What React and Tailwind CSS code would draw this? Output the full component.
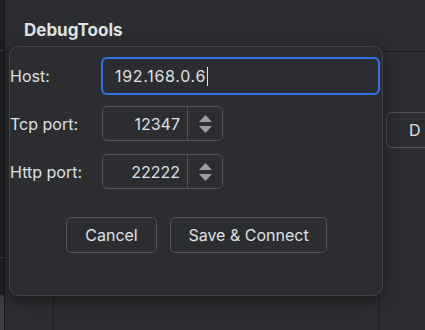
import React from 'react';

const font = { fontFamily: 'Inter, "Noto Sans", sans-serif' };

const Spinner = ({ value }) => (
    <div className="flex w-[121px] h-[35px] rounded-[5px] border border-[#4e5157]">
        <div className="flex-1 flex items-center justify-end pr-[7px] text-[16px] text-[#dfe1e5] border-r border-[#4e5157]">
            {value}
        </div>
        <div className="w-[34px] flex flex-col items-center justify-center gap-[4px]">
            <svg width="13" height="7" viewBox="0 0 13 7"><path d="M6.5 0 L13 7 L0 7 Z" fill="#9a9da3" /></svg>
            <svg width="13" height="7" viewBox="0 0 13 7"><path d="M0 0 L13 0 L6.5 7 Z" fill="#9a9da3" /></svg>
        </div>
    </div>
);

export default function App() {
    return (
        <div className="relative w-[425px] h-[330px] overflow-hidden bg-[#2b2d30] flex flex-col" style={font}>
            {/* top edge */}
            <div className="h-[3px] bg-[#1e1f22]" />
            <div className="flex-1 flex">
                {/* left tool strip */}
                <div className="w-[8px] bg-[#1e1f22] border-r border-[#18191b] flex flex-col">
                    <div className="h-[51px] border-b border-[#3a3c40]" />
                    <div className="h-[207px] border-b border-[#3a3c40]" />
                    <div className="mt-[37px] h-[40px] w-[4px] rounded-r-[3px] bg-[#3c3e42]" />
                </div>
                <div className="flex-1 flex flex-col">
                    {/* header */}
                    <div className="h-[52px] flex items-center pl-[19px] pt-[10px] border-b border-[#1e1f22]">
                        <span className="text-[17px] font-bold text-[#dfe1e5]">DebugTools</span>
                    </div>
                    <div className="flex-1 flex">
                        <div className="w-[49px] border-r border-[#1e1f22]" />
                        <div className="w-[325px] border-r border-[#1e1f22]" />
                        <div className="flex-1 pl-[7px] pt-[60px]">
                            <div className="w-[60px] h-[36px] rounded-[5px] border border-[#4e5157] flex items-center pl-[22px] text-[16px] text-[#dfe1e5] overflow-hidden whitespace-nowrap">
                                D
                            </div>
                        </div>
                    </div>
                </div>
            </div>

            {/* dialog */}
            <div className="absolute left-[9px] top-[46px] w-[374px] h-[250px] rounded-[10px] border border-[#43454a] bg-[#2b2d30] shadow-[0_4px_16px_rgba(0,0,0,0.45)] pt-[10px] pr-[2px]">
                <div className="flex items-center h-[38px]">
                    <div className="w-[91px] text-[16px] text-[#dfe1e5]">Host:</div>
                    <div className="flex-1 h-[38px] rounded-[6px] border-2 border-[#3574f0] flex items-center pl-[12px] text-[16px] tracking-[0.7px] text-[#dfe1e5]">
                        192.168.0.6
                        <span className="ml-[1px] w-px h-[19px] bg-[#dfe1e5]" />
                    </div>
                </div>
                <div className="flex items-center mt-[11px]">
                    <div className="w-[92px] text-[16px] text-[#dfe1e5]">Tcp port:</div>
                    <Spinner value="12347" />
                </div>
                <div className="flex items-center mt-[13px]">
                    <div className="w-[92px] text-[16px] text-[#dfe1e5]">Http port:</div>
                    <Spinner value="22222" />
                </div>
                <div className="flex gap-[13px] mt-[28px] pl-[56px]">
                    <button className="w-[91px] h-[36px] rounded-[5px] border border-[#4e5157] text-[16px] text-[#dfe1e5]">
                        Cancel
                    </button>
                    <button className="w-[157px] h-[36px] rounded-[5px] border border-[#4e5157] text-[16px] text-[#dfe1e5]">
                        Save &amp; Connect
                    </button>
                </div>
            </div>
        </div>
    );
}
